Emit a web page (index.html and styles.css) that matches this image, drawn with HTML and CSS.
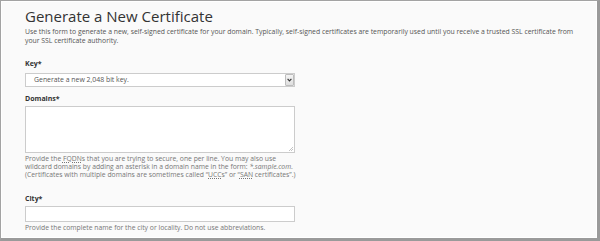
FILE: index.html
```html
<!DOCTYPE html>
<html lang="en">
<head>
<meta charset="utf-8">
<title>Generate a New Certificate</title>
<link rel="stylesheet" href="styles.css">
</head>
<body>
<div class="frame">
  <h1 class="title">Generate a New Certificate</h1>
  <p class="intro">Use this form to generate a new, self-signed certificate for your domain. Typically, self-signed certificates are temporarily used until you receive a trusted SSL certificate from your SSL certificate authority.</p>

  <div class="field field-key">
    <div class="label">Key*</div>
    <div class="select">
      <span class="select-text">Generate a new 2,048 bit key.</span>
      <span class="select-btn"><svg width="5" height="4" viewBox="0 0 5 4"><path d="M0.6 0.8 L2.5 2.9 L4.4 0.8" fill="none" stroke="#333" stroke-width="1.1"/></svg></span>
    </div>
  </div>

  <div class="field field-domains">
    <div class="label">Domains*</div>
    <div class="textarea">
      <svg class="grip" width="5" height="5" viewBox="0 0 5 5"><path d="M1 5 L5 1 M3 5 L5 3" stroke="#b5b5b5" stroke-width="0.8"/></svg>
    </div>
    <div class="help help-wide">Provide the <abbr>FQDN</abbr>s that you are trying to secure, one per line. You may also use<br>wildcard domains by adding an asterisk in a domain name in the form: <em>*.sample.com</em>.<br>(Certificates with multiple domains are sometimes called “<abbr>UCC</abbr>s” or “<abbr>SAN</abbr> certificates”.)</div>
  </div>

  <div class="field field-city">
    <div class="label">City*</div>
    <div class="input"></div>
    <div class="help">Provide the complete name for the city or locality. Do not use abbreviations.</div>
  </div>
</div>
</body>
</html>
```
FILE: styles.css
```css
html, body {
  margin: 0;
  padding: 0;
  background: #ffffff;
}

.frame {
  box-sizing: border-box;
  width: 600px;
  height: 241px;
  overflow: hidden;
  border: 1px solid #a3a3a3;
  border-right: 3px solid #9a9a9a;
  border-bottom: 3px solid #9a9a9a;
  background: #fafafa;
  box-shadow: inset 1px 1px 0 #ffffff, inset -1px -1px 0 #ffffff;
  padding: 4.5px 0 0 24px;
  font-family: "Open Sans", "Noto Sans", sans-serif;
  color: #333333;
}

.title {
  margin: 0;
  font-size: 15px;
  font-weight: 400;
  line-height: 20px;
  color: #333333;
}

.intro {
  margin: 2.8px 0 0 0;
  width: 556px;
  font-size: 6.85px;
  line-height: 8.4px;
  color: #555555;
}

.field {
  width: 270px;
}

.field-key { margin-top: 15px; }
.field-domains { margin-top: 8.2px; }
.field-city { margin-top: 16px; }

.label {
  font-size: 7px;
  font-weight: 700;
  line-height: 8px;
  color: #333333;
  margin-bottom: 4.5px;
}

.field-domains .label { margin-bottom: 2.5px; }
.field-city .label { margin-bottom: 3px; }

.select {
  box-sizing: border-box;
  height: 14.5px;
  border: 1px solid #cccccc;
  background: #ffffff;
  display: flex;
  align-items: center;
  justify-content: space-between;
}

.select-text {
  padding-left: 8px;
  font-size: 6.9px;
  color: #555555;
}

.select-btn {
  box-sizing: border-box;
  width: 9px;
  height: 12.5px;
  border: 1px solid #bdbdbd;
  border-radius: 1px;
  background: linear-gradient(#f4f4f4, #dedede);
  display: flex;
  align-items: center;
  justify-content: center;
}

.textarea {
  box-sizing: border-box;
  height: 47px;
  border: 1px solid #cccccc;
  background: #ffffff;
  position: relative;
}

.grip {
  position: absolute;
  right: 1px;
  bottom: 1px;
}

.input {
  box-sizing: border-box;
  height: 16.5px;
  border: 1px solid #cccccc;
  background: #ffffff;
}

.help {
  margin-top: 2.4px;
  font-size: 6.8px;
  line-height: 7.8px;
  color: #777777;
}

.help-wide {
  width: 300px;
}

.field-city .help { margin-top: 1.5px; }

abbr {
  text-decoration: underline dotted;
  text-underline-offset: 1px;
}

em { font-style: italic; }
```
